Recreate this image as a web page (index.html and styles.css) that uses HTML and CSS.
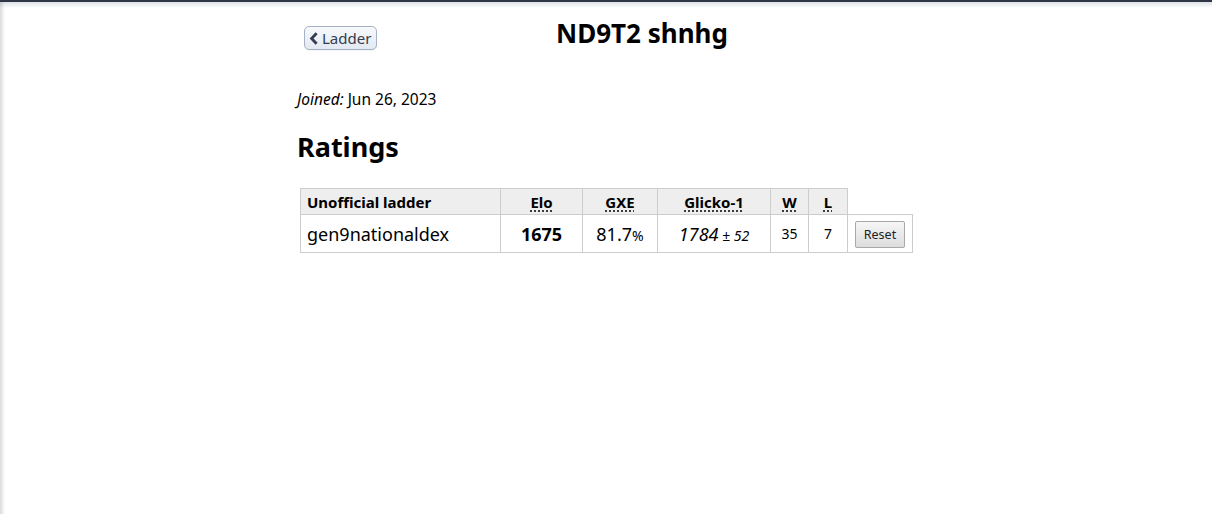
FILE: index.html
```html
<!DOCTYPE html>
<html>
<head>
<meta charset="utf-8">
<link rel="stylesheet" href="styles.css">
</head>
<body>
<div class="page">
  <div class="content">
    <div class="topbar">
      <button class="back"><svg class="chev" width="10" height="13" viewBox="0 0 10 13"><path d="M7.6 1.3 L2.6 6.5 L7.6 11.7" fill="none" stroke="#333c4c" stroke-width="2.8" stroke-linejoin="miter"/></svg>Ladder</button>
      <h1 class="title">ND9T2 shnhg</h1>
    </div>
    <p class="joined"><em>Joined:</em> Jun 26, 2023</p>
    <h2 class="ratings">Ratings</h2>
    <table class="ladder">
      <tr class="head">
        <th class="c-name">Unofficial ladder</th>
        <th class="c-elo"><abbr>Elo</abbr></th>
        <th class="c-gxe"><abbr>GXE</abbr></th>
        <th class="c-gl"><abbr>Glicko-1</abbr></th>
        <th class="c-w"><abbr>W</abbr></th>
        <th class="c-l"><abbr>L</abbr></th>
        <th class="c-blank"></th>
      </tr>
      <tr class="row">
        <td class="c-name">gen9nationaldex</td>
        <td class="c-elo"><strong>1675</strong></td>
        <td class="c-gxe">81.7<small>%</small></td>
        <td class="c-gl"><em>1784<small> ± 52</small></em></td>
        <td class="c-w small">35</td>
        <td class="c-l small">7</td>
        <td class="c-reset"><button class="reset">Reset</button></td>
      </tr>
    </table>
  </div>
</div>
</body>
</html>
```
FILE: styles.css
```css
html, body {
  margin: 0;
  padding: 0;
  background: #fff;
}
body {
  font-family: "Noto Sans", "Open Sans", sans-serif;
  color: #000;
}
.page {
  height: 514px;
  box-sizing: border-box;
  border-top: 2px solid #2f3746;
  background:
    linear-gradient(to bottom, rgba(120,135,160,0.25), rgba(255,255,255,0) 6px),
    linear-gradient(to right, rgba(150,150,150,0.35), rgba(255,255,255,0) 5px),
    #fff;
}
.content {
  width: 690px;
  padding-left: 297px;
}
.topbar {
  display: flex;
  align-items: flex-start;
  position: relative;
  height: 74px;
}
.back {
  margin: 24px 0 0 7px;
  height: 24px;
  padding: 0 5px 0 4px;
  display: flex;
  align-items: center;
  gap: 3px;
  border: 1px solid #a5b1c5;
  border-radius: 5px;
  background: linear-gradient(#f7f9fc, #e3e9f2);
  font-family: "Noto Sans", sans-serif;
  font-size: 15px;
  color: #333c4c;
  box-shadow: 0 1px 1px rgba(0,0,0,0.05);
}
.chev { display: block; }
.title {
  position: absolute;
  left: 0;
  right: 0;
  top: 13px;
  margin: 0;
  text-align: center;
  font-size: 26px;
  font-weight: bold;
  line-height: 36px;
}
.joined {
  margin: 13px 0 0 0;
  font-size: 15.5px;
  line-height: 20px;
}
.ratings {
  margin: 20px 0 0 0;
  font-size: 27px;
  line-height: 36px;
  font-weight: bold;
}
.ladder {
  margin: 23px 0 0 3px;
  border-collapse: collapse;
}
.ladder th, .ladder td {
  border: 1px solid #cccccc;
  padding: 0 6px;
}
.ladder th {
  background: #eeeeee;
  height: 25px;
  font-size: 15px;
  font-weight: bold;
  text-align: center;
}
.ladder th.c-name { text-align: left; }
.ladder th.c-blank {
  background: transparent;
  border: none;
  border-left: 1px solid #cccccc;
  border-bottom: 1px solid #cccccc;
}
.ladder td {
  height: 37px;
  font-size: 18px;
  text-align: center;
}
.ladder td.c-name { text-align: left; }
.ladder td.small { font-size: 14px; }
.ladder small { font-size: 14px; }
abbr {
  text-decoration: underline dotted;
  text-underline-offset: 3px;
}
.c-name { width: 187px; }
.c-elo { width: 69px; }
.c-gxe { width: 62px; }
.c-gl { width: 100px; }
.c-w { width: 25px; }
.c-l { width: 26px; }
.c-reset { width: 52px; }
.reset {
  font-family: "Noto Sans", sans-serif;
  font-size: 12.5px;
  height: 27px;
  width: 50px;
  padding: 0;
  border: 1px solid #a8a8a8;
  border-radius: 2px;
  background: linear-gradient(#f6f6f6, #dddddd);
  color: #222;
}
```
